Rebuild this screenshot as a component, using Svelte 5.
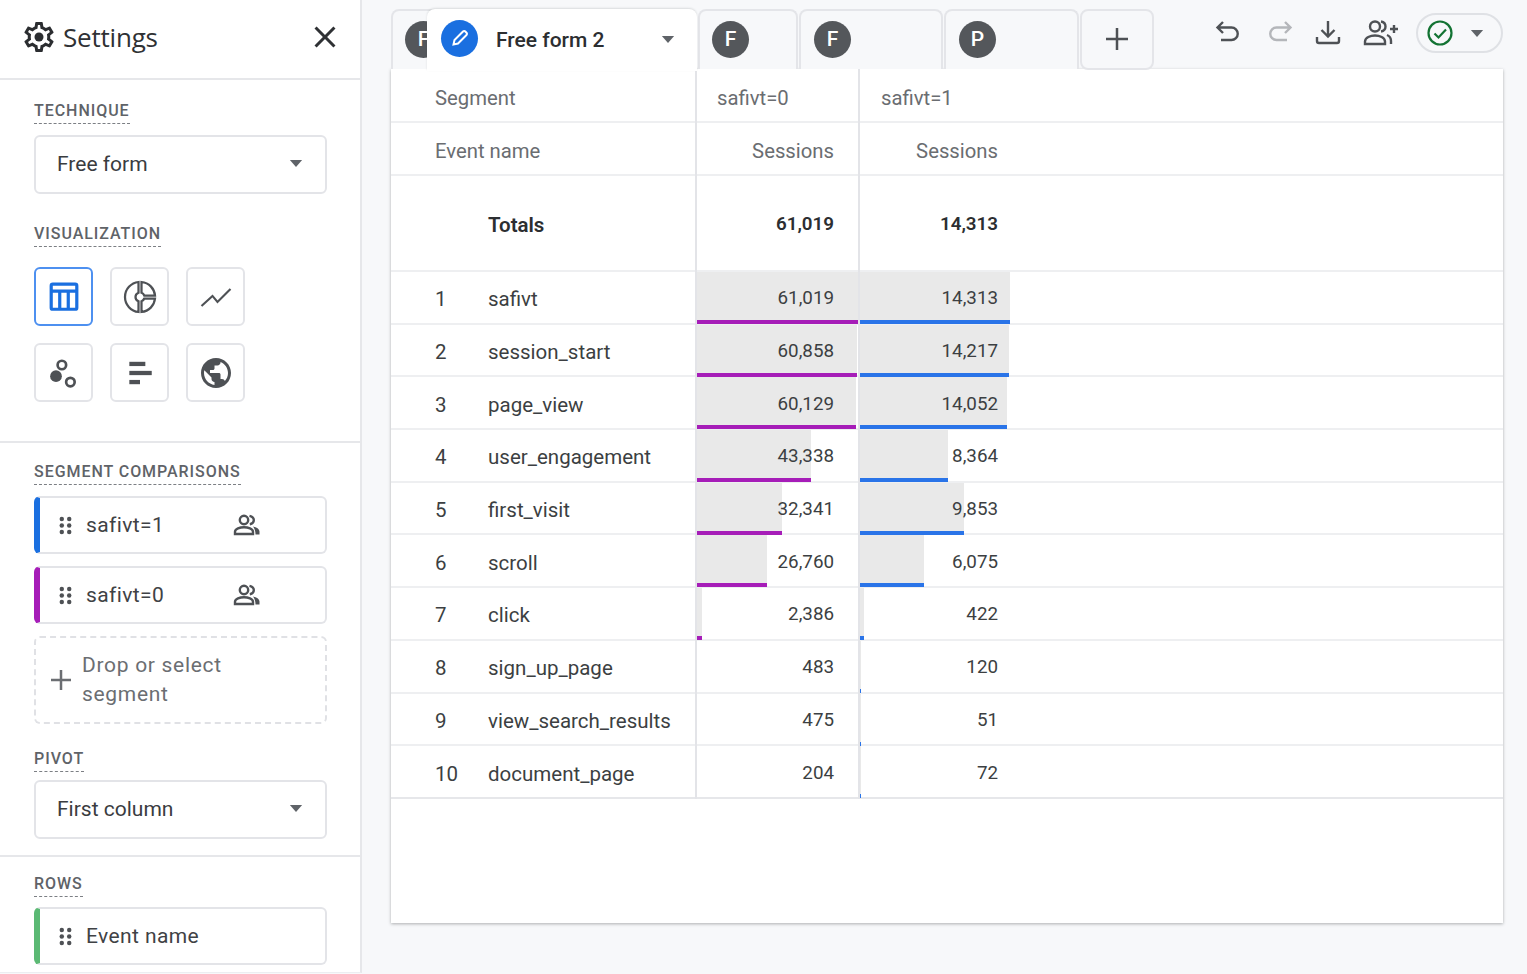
<script>
  const rows = [
    { name: 'safivt', a: '61,019', b: '14,313', aw: 161, bw: 150 },
    { name: 'session_start', a: '60,858', b: '14,217', aw: 160, bw: 149 },
    { name: 'page_view', a: '60,129', b: '14,052', aw: 159, bw: 147 },
    { name: 'user_engagement', a: '43,338', b: '8,364', aw: 114, bw: 88 },
    { name: 'first_visit', a: '32,341', b: '9,853', aw: 85, bw: 104 },
    { name: 'scroll', a: '26,760', b: '6,075', aw: 70, bw: 64 },
    { name: 'click', a: '2,386', b: '422', aw: 5, bw: 4 },
    { name: 'sign_up_page', a: '483', b: '120', aw: 0, bw: 1 },
    { name: 'view_search_results', a: '475', b: '51', aw: 0, bw: 1 },
    { name: 'document_page', a: '204', b: '72', aw: 0, bw: 1 }
  ];
</script>

{#snippet caret()}
  <svg class="caret" viewBox="0 0 16 8"><path d="M1 0h14L8 8z" /></svg>
{/snippet}

{#snippet dots()}
  <svg class="dots" viewBox="0 0 14 20">
    <circle cx="3" cy="3" r="2.4" /><circle cx="11" cy="3" r="2.4" />
    <circle cx="3" cy="10" r="2.4" /><circle cx="11" cy="10" r="2.4" />
    <circle cx="3" cy="17" r="2.4" /><circle cx="11" cy="17" r="2.4" />
  </svg>
{/snippet}

{#snippet people()}
  <svg class="people" viewBox="0 0 28 22">
    <circle cx="11" cy="6" r="4.2" />
    <path d="M2 20v-2.2c0-3 5-4.6 9-4.6s9 1.6 9 4.6V20z" />
    <path d="M16.500 1.800c2.800.6 4.300 2.400 4.300 4.300s-1.500 3.700-4 4.200" />
    <path class="solid" d="M20 12.500c3.500.8 6.500 2.400 6.500 5V20.500H22.500c0-3.500-1-6-2.500-8z" />
  </svg>
{/snippet}

<div class="app">
  <aside class="side">
    <header class="side-head">
      <svg class="gear" viewBox="0 0 24 24">
        <path d="M19.43 12.98c.04-.32.07-.64.07-.98 0-.34-.03-.66-.07-.98l2.11-1.65c.19-.15.24-.42.12-.64l-2-3.46c-.09-.16-.26-.25-.44-.25-.06 0-.12.01-.17.03l-2.49 1c-.52-.4-1.08-.73-1.69-.98l-.38-2.65C14.46 2.18 14.25 2 14 2h-4c-.25 0-.46.18-.49.42l-.38 2.65c-.61.25-1.17.59-1.69.98l-2.49-1c-.06-.02-.12-.03-.18-.03-.17 0-.34.09-.43.25l-2 3.46c-.13.22-.07.49.12.64l2.11 1.65c-.04.32-.07.65-.07.98 0 .33.03.66.07.98l-2.11 1.65c-.19.15-.24.42-.12.64l2 3.46c.09.16.26.25.44.25.06 0 .12-.01.17-.03l2.49-1c.52.4 1.08.73 1.69.98l.38 2.65c.03.24.24.42.49.42h4c.25 0 .46-.18.49-.42l.38-2.65c.61-.25 1.17-.59 1.69-.98l2.49 1c.06.02.12.03.18.03.17 0 .34-.09.43-.25l2-3.46c.12-.22.07-.49-.12-.64l-2.11-1.65zm-1.98-1.71c.04.31.05.52.05.73 0 .21-.02.43-.05.73l-.14 1.13.89.7 1.08.84-.7 1.21-1.27-.51-1.04-.42-.9.68c-.43.32-.84.56-1.25.73l-1.06.43-.16 1.13-.2 1.35h-1.4l-.19-1.35-.16-1.13-1.06-.43c-.43-.18-.83-.41-1.23-.71l-.91-.7-1.06.43-1.27.51-.7-1.21 1.08-.84.89-.7-.14-1.13c-.03-.31-.05-.54-.05-.74s.02-.43.05-.73l.14-1.13-.89-.7-1.08-.84.7-1.21 1.27.51 1.04.42.9-.68c.43-.32.84-.56 1.25-.73l1.06-.43.16-1.13.2-1.35h1.39l.19 1.35.16 1.13 1.06.43c.43.18.83.41 1.23.71l.91.7 1.06-.43 1.27-.51.7 1.21-1.07.85-.89.7.14 1.13z" />
        <circle cx="12" cy="12" r="3" />
      </svg>
      <span class="title">Settings</span>
      <svg class="close" viewBox="0 0 24 24">
        <path d="M19 6.410 17.590 5 12 10.590 6.410 5 5 6.410 10.590 12 5 17.590 6.410 19 12 13.410 17.590 19 19 17.590 13.410 12z" />
      </svg>
    </header>

    <section class="sec sec-a">
      <div class="label">TECHNIQUE</div>
      <div class="select"><span>Free form</span>{@render caret()}</div>
      <div class="label label-gap">VISUALIZATION</div>
      <div class="viz">
        <div class="viz-btn on">
          <svg viewBox="0 0 30 30" class="blue">
            <rect x="3" y="3" width="24" height="23.500" rx="1.500" />
            <path d="M3 9.500h24M11 9.500v16.500M19 9.500v16.500" />
          </svg>
        </div>
        <div class="viz-btn">
          <svg viewBox="0 0 24 24" class="line donut">
            <path d="M11 9.160V2c-5 .5-9 4.790-9 10s4 9.500 9 10v-7.160c-1-.41-2-1.520-2-2.840s1-2.430 2-2.840zM14.860 11H22c-.48-4.750-4-8.530-9-9v7.160c1 .3 1.520.98 1.860 1.840zM13 14.840V22c5-.47 8.520-4.250 9-9h-7.140c-.34.86-.86 1.540-1.860 1.840z" />
          </svg>
        </div>
        <div class="viz-btn">
          <svg viewBox="0 0 30 30" class="line">
            <path d="M1.400 23.400L11.700 14l4.700 5.700L28.600 7.500" />
          </svg>
        </div>
        <div class="viz-btn">
          <svg viewBox="0 0 30 30">
            <circle cx="7.500" cy="18" r="5.500" class="fill" />
            <circle cx="13" cy="7.500" r="4" class="ring" />
            <circle cx="21" cy="23.500" r="4" class="ring" />
          </svg>
        </div>
        <div class="viz-btn">
          <svg viewBox="0 0 30 30" class="fill">
            <rect x="5" y="4.500" width="15" height="4" />
            <rect x="5" y="13" width="21" height="4" />
            <rect x="5" y="21.500" width="10" height="4" />
          </svg>
        </div>
        <div class="viz-btn">
          <svg viewBox="0 0 24 24" class="fill globe">
            <path d="M12 2C6.480 2 2 6.480 2 12s4.480 10 10 10 10-4.480 10-10S17.520 2 12 2zm-1 17.930c-3.950-.49-7-3.850-7-7.930 0-.62.08-1.210.21-1.790L9 15v1c0 1.100.9 2 2 2v1.930zm6.900-2.540c-.26-.81-1-1.390-1.900-1.390h-1v-3c0-.55-.45-1-1-1H8v-2h2c.55 0 1-.45 1-1V7h2c1.100 0 2-.9 2-2v-.41c2.930 1.190 5 4.060 5 7.410 0 2.080-.8 3.970-2.100 5.390z" />
          </svg>
        </div>
      </div>
    </section>

    <section class="sec sec-b">
      <div class="label">SEGMENT COMPARISONS</div>
      <div class="chip chip-blue chip-first">
        {@render dots()}<span class="chip-text">safivt=1</span>{@render people()}
      </div>
      <div class="chip chip-purple chip-second">
        {@render dots()}<span class="chip-text">safivt=0</span>{@render people()}
      </div>
      <div class="drop">
        <svg class="drop-plus" viewBox="0 0 20 20"><path d="M10 0v20M0 10h20" /></svg>
        <span>Drop or select<br />segment</span>
      </div>
      <div class="label label-pivot">PIVOT</div>
      <div class="select select-pivot"><span>First column</span>{@render caret()}</div>
    </section>

    <section class="sec sec-c">
      <div class="label">ROWS</div>
      <div class="chip chip-green chip-first-row">
        {@render dots()}<span class="chip-text">Event name</span>
      </div>
    </section>
  </aside>

  <main class="main">
    <div class="tabbar">
      <div class="tab tab-0"><span class="badge">F</span></div>
      <div class="tab tab-active">
        <span class="badge badge-blue">
          <svg viewBox="0 0 20 20"><path d="M3.500 16.500l1-4.500L13 3.500a1.600 1.600 0 0 1 2.300 0l1.200 1.200a1.600 1.600 0 0 1 0 2.300L8 15.500z" /></svg>
        </span>
        <span class="tab-name">Free form 2</span>
        <span class="tab-caret">{@render caret()}</span>
      </div>
      <div class="tab tab-1"><span class="badge">F</span></div>
      <div class="tab tab-2"><span class="badge">F</span></div>
      <div class="tab tab-3"><span class="badge">P</span></div>
      <div class="tab tab-add">
        <svg viewBox="0 0 24 24"><path d="M12 1v22M1 12h22" /></svg>
      </div>
      <div class="tools">
        <svg class="tool" viewBox="0 0 28 28"><path d="M9 3L3.500 8.500 9 14M4 8.500h13.500a6 6 0 0 1 0 12.500H7" /></svg>
        <svg class="tool tool-off" viewBox="0 0 28 28"><path d="M19 3l5.500 5.500L19 14M24 8.500H10.500a6 6 0 0 0 0 12.500H21" /></svg>
        <svg class="tool tool-dl" viewBox="0 0 28 28"><path d="M14 2v15M7.500 11l6.500 6.500 6.500-6.500M3 18v4a2 2 0 0 0 2 2h18a2 2 0 0 0 2-2v-4" /></svg>
        <svg class="tool tool-add" viewBox="0 0 36 28">
          <circle cx="12" cy="7.500" r="5" />
          <path d="M2 25v-2.500c0-4 5.500-6 10-6s10 2 10 6V25z" />
          <path d="M18 2.500c3 .6 4.500 2.700 4.500 5s-1.500 4.400-4.500 5M24 16c2.500 1 4 3 4 6v3" />
          <path d="M31 6v8M27 10h8" />
        </svg>
        <div class="status">
          <svg class="ok" viewBox="0 0 26 26"><circle cx="13" cy="13" r="11.500" /><path d="M7.500 13.500l4 4 7.500-8" /></svg>
          {@render caret()}
        </div>
      </div>
    </div>

    <div class="card">
      <div class="row row-head row-top">
        <div class="c-label"><span class="head-seg">Segment</span></div>
        <div class="c-num c-left">safivt=0</div>
        <div class="c-num c-left c-left-b">safivt=1</div>
      </div>
      <div class="row row-head">
        <div class="c-label"><span class="head-seg">Event name</span></div>
        <div class="c-num">Sessions</div>
        <div class="c-num">Sessions</div>
      </div>
      <div class="row row-total">
        <div class="c-label"><span class="rank"></span><span class="name">Totals</span></div>
        <div class="c-num"><span class="val">61,019</span></div>
        <div class="c-num"><span class="val">14,313</span></div>
      </div>
      {#each rows as r, i}
        <div class="row row-data">
          <div class="c-label"><span class="rank">{i + 1}</span><span class="name">{r.name}</span></div>
          <div class="c-num">
            <i class="bar bar-purple" style="width:{r.aw}px"></i><span class="val">{r.a}</span>
          </div>
          <div class="c-num">
            <i class="bar bar-blue" style="width:{r.bw}px"></i><span class="val">{r.b}</span>
          </div>
        </div>
      {/each}
    </div>
  </main>
</div>

<style>
  :global(body) {
    margin: 0;
    background: #f7f8fa;
  }
  .app {
    display: flex;
    height: 974px;
    overflow: hidden;
    font-family: Roboto, "Liberation Sans", sans-serif;
    color: #3c4043;
  }
  .side {
    flex: 0 0 360px;
    height: 972px;
    background: #fff;
    border-right: 2px solid #e6e7ea;
    border-bottom: 1px solid #eceef1;
    overflow: hidden;
  }
  .side-head {
    height: 74px;
    border-bottom: 2px solid #e6e7ea;
    display: flex;
    align-items: center;
    padding: 0 24px 4px;
  }
  .gear {
    width: 36px;
    height: 36px;
    margin-left: -3px;
    fill: #2b2d30;
  }
  .title {
    font-family: "Open Sans", Roboto, sans-serif;
    font-size: 26px;
    letter-spacing: -0.2px;
    color: #2f3134;
    margin-left: 6px;
    flex: 1;
  }
  .close {
    width: 36px;
    height: 36px;
    fill: #2f3134;
    margin-right: -7px;
  }
  .sec {
    padding: 0 34px;
    border-bottom: 2px solid #e6e7ea;
  }
  .sec-a {
    padding-top: 20px;
    padding-bottom: 39px;
  }
  .sec-b {
    padding-top: 18px;
    padding-bottom: 16px;
  }
  .sec-c {
    padding-top: 16px;
    border-bottom: 0;
  }
  .label {
    width: fit-content;
    height: 24px;
    line-height: 22px;
    font-size: 16px;
    font-weight: 500;
    letter-spacing: 0.95px;
    color: #5f6368;
    border-bottom: 1px dashed #7c7f84;
    box-sizing: border-box;
  }
  .label-gap {
    margin-top: 29px;
  }
  .label-pivot {
    margin-top: 24px;
  }
  .select {
    margin-top: 11px;
    width: 293px;
    height: 59px;
    box-sizing: border-box;
    border: 2px solid #e3e4e8;
    border-radius: 6px;
    display: flex;
    align-items: center;
    justify-content: space-between;
    padding: 0 22px 2px 21px;
    font-size: 21px;
    color: #3a3c3f;
  }
  .select-pivot {
    margin-top: 8px;
  }
  .caret {
    width: 14px;
    height: 7px;
    fill: #5f6368;
    flex: none;
  }
  .viz {
    margin-top: 20px;
    display: grid;
    grid-template-columns: repeat(3, 59px);
    grid-auto-rows: 59px;
    gap: 17px;
  }
  .viz-btn {
    border: 2px solid #e3e4e8;
    border-radius: 6px;
    box-sizing: border-box;
    display: flex;
    align-items: center;
    justify-content: center;
  }
  .viz-btn.on {
    border-color: #4d90f0;
  }
  .viz-btn svg {
    width: 32px;
    height: 32px;
  }
  .blue {
    fill: none;
    stroke: #1a6fe0;
    stroke-width: 3;
  }
  .line {
    fill: none;
    stroke: #4e5155;
    stroke-width: 2;
  }
  .viz-btn svg.donut {
    width: 36px;
    height: 36px;
    stroke-width: 1.500;
  }
  .viz-btn svg.globe {
    width: 36px;
    height: 36px;
  }
  .fill {
    fill: #4e5155;
  }
  .ring {
    fill: none;
    stroke: #4e5155;
    stroke-width: 2.500;
  }
  .chip {
    width: 293px;
    height: 58px;
    box-sizing: border-box;
    border: 2px solid #e3e4e8;
    border-left-width: 6px;
    border-radius: 6px;
    display: flex;
    align-items: center;
    padding-left: 19px;
    font-size: 21px;
    letter-spacing: 0.4px;
    color: #3f4245;
  }
  .chip-first {
    margin-top: 11px;
  }
  .chip-second {
    margin-top: 12px;
  }
  .chip-first-row {
    margin-top: 10px;
  }
  .chip-blue {
    border-left-color: #1a6fe0;
  }
  .chip-purple {
    border-left-color: #a61db8;
  }
  .chip-green {
    border-left-color: #5bb974;
  }
  .dots {
    width: 13px;
    height: 19px;
    fill: #4e5155;
    flex: none;
  }
  .chip-text {
    margin-left: 14px;
    width: 147px;
  }
  .people {
    width: 28px;
    height: 22px;
    fill: none;
    stroke: #4e5155;
    stroke-width: 2.400;
    flex: none;
  }
  .people .solid {
    fill: #4e5155;
    stroke: none;
  }
  .drop {
    margin-top: 12px;
    width: 293px;
    height: 88px;
    box-sizing: border-box;
    border: 2px dashed #e0e1e5;
    border-radius: 6px;
    display: flex;
    align-items: center;
    padding-left: 15px;
    font-size: 21px;
    letter-spacing: 0.7px;
    line-height: 29px;
    color: #6b6e72;
  }
  .drop-plus {
    width: 20px;
    height: 20px;
    stroke: #6b6e72;
    stroke-width: 2.500;
    flex: none;
    margin-right: 11px;
  }
  .main {
    flex: 1;
    padding: 9px 24px 0 29px;
    min-width: 0;
  }
  .tabbar {
    display: flex;
    height: 60px;
    position: relative;
    z-index: 1;
  }
  .tab {
    box-sizing: border-box;
    height: 60px;
    border: 2px solid #e4e5e9;
    border-bottom: 0;
    border-radius: 8px 8px 0 0;
    background: #f7f8fa;
    display: flex;
    align-items: center;
    padding-left: 13px;
    padding-bottom: 2px;
    flex: none;
    margin-right: 1px;
  }
  .tab-0 {
    width: 60px;
    margin-right: -24px;
    padding-left: 12px;
  }
  .tab-active {
    width: 270px;
    background: #fff;
    border: 0;
    height: 62px;
    padding-left: 14px;
    padding-bottom: 4px;
    box-shadow: 0 -1px 2px rgba(60, 64, 67, 0.15);
    position: relative;
  }
  .tab-1 {
    width: 100px;
    padding-left: 12px;
  }
  .tab-2 {
    width: 144px;
  }
  .tab-3 {
    width: 135px;
  }
  .tab-add {
    width: 74px;
    height: 61px;
    border-bottom: 2px solid #e4e5e9;
    border-radius: 8px;
    justify-content: center;
    padding: 0 0 2px;
    margin: 0;
  }
  .tab-add svg {
    width: 24px;
    height: 24px;
    stroke: #4e5155;
    stroke-width: 2.500;
  }
  .badge {
    width: 37px;
    height: 37px;
    border-radius: 50%;
    background: #54575b;
    color: #fff;
    font-size: 21px;
    font-weight: 500;
    display: flex;
    align-items: center;
    justify-content: center;
    flex: none;
  }
  .badge-blue {
    background: #1a6fe0;
  }
  .badge-blue svg {
    width: 20px;
    height: 20px;
    fill: none;
    stroke: #fff;
    stroke-width: 2;
  }
  .tab-name {
    margin-left: 18px;
    width: 165px;
    padding-top: 4px;
    font-size: 21px;
    font-weight: 500;
    color: #2c2e31;
  }
  .tab-caret {
    display: flex;
    padding-top: 2px;
  }
  .tools {
    margin-left: auto;
    display: flex;
    align-items: flex-start;
    padding-top: 4px;
  }
  .tool {
    width: 28px;
    height: 28px;
    margin-top: 6px;
    fill: none;
    stroke: #4e5155;
    stroke-width: 2.400;
  }
  .tool-off {
    stroke: #b4b6ba;
    margin-left: 24px;
  }
  .tool-dl {
    margin-left: 20px;
  }
  .tool-add {
    width: 36px;
    margin-left: 21px;
  }
  .status {
    margin-left: 17px;
    width: 87px;
    height: 40px;
    box-sizing: border-box;
    border: 2px solid #dfe1e5;
    border-radius: 20px;
    display: flex;
    align-items: center;
    gap: 17px;
    padding-left: 9px;
  }
  .ok {
    width: 26px;
    height: 26px;
    fill: none;
    stroke: #137333;
    stroke-width: 2.200;
    flex: none;
  }
  .card {
    height: 854px;
    background: #fff;
    box-shadow: 0 1px 3px rgba(60, 64, 67, 0.4);
    font-size: 20.5px;
  }
  .row {
    display: grid;
    grid-template-columns: 304px 163px 164px 1fr;
    border-bottom: 2px solid #eeeff1;
    box-sizing: border-box;
  }
  .row-head {
    height: 53px;
    color: #6a6d71;
    font-size: 20.3px;
  }
  .row-top {
    height: 54px;
  }
  .row-top .c-label,
  .row-top .c-num {
    padding-top: 6px;
  }
  .row-total {
    height: 96px;
    font-weight: 600;
    color: #2c2e31;
  }
  .row-data {
    height: 52.700px;
    color: #3c3f42;
  }
  .row-data:last-child {
    border-bottom-color: #e6e7ea;
  }
  .c-label {
    display: flex;
    align-items: center;
    padding-left: 44px;
    padding-top: 4px;
  }
  .rank {
    width: 53px;
    flex: none;
  }
  .c-num {
    position: relative;
    border-left: 2px solid #e3e4e8;
    display: flex;
    align-items: center;
    justify-content: flex-end;
    padding-right: 24px;
    margin-bottom: -2px;
    padding-bottom: 2px;
    padding-top: 2px;
  }
  .row-head:not(.row-top) .c-num {
    padding-top: 4px;
  }
  .c-left {
    justify-content: flex-start;
    padding-left: 20px;
  }
  .c-left-b {
    padding-left: 21px;
  }
  .val {
    position: relative;
    font-size: 18.8px;
  }
  .bar {
    position: absolute;
    left: 0;
    top: 0;
    height: 52px;
    background: #e9e9e9;
    box-sizing: border-box;
    border-bottom: 4px solid #000;
  }
  .bar-purple {
    border-bottom-color: #a61db8;
  }
  .bar-blue {
    border-bottom-color: #2a74e8;
  }
</style>
